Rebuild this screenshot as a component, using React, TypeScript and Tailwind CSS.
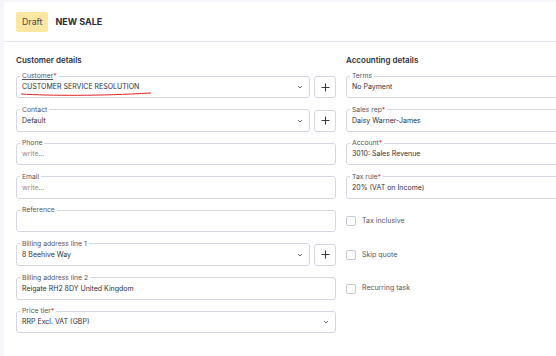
import React from "react";

const font = { fontFamily: "Inter, 'Noto Sans', sans-serif" };

function Chevron() {
  return (
    <svg width="6" height="4" viewBox="0 0 6 4" className="shrink-0">
      <path d="M1 1 L3 3 L5 1" fill="none" stroke="#6b6b78" strokeWidth="1" />
    </svg>
  );
}

function Field({
  label,
  value,
  req,
  placeholder,
  select,
  underline,
  children,
}: {
  label: string;
  value?: string;
  req?: boolean;
  placeholder?: boolean;
  select?: boolean;
  underline?: boolean;
  children?: React.ReactNode;
}) {
  return (
    <fieldset className="relative flex-1 min-w-0 border border-[#d6d6e2] rounded-[3px] pl-[3px] pr-[6px] pb-[4px] m-0">
      <legend className="px-[2px] text-[6.8px] leading-[8px] text-[#555560]">
        <span className={underline ? "underline" : ""}>{label}</span>
        {req && <span className="text-[#e03131]">*</span>}
      </legend>
      <div className="flex items-center h-[12px] mt-[1px] pl-[2px]">
        <span
          className={
            "flex-1 text-[7px] leading-[12px] whitespace-nowrap " +
            (placeholder ? "text-[#8a8a95]" : "text-[#2f2f38]")
          }
        >
          {value}
        </span>
        {select && <Chevron />}
      </div>
      {children}
    </fieldset>
  );
}

function Plus() {
  return (
    <div className="w-[22px] h-[22px] mt-[4px] border border-[#d6d6e2] rounded-[3px] flex items-center justify-center shrink-0">
      <svg width="9" height="9" viewBox="0 0 9 9">
        <path d="M4.5 0.5 V8.5 M0.5 4.5 H8.5" stroke="#3a3a44" strokeWidth="1.1" />
      </svg>
    </div>
  );
}

function Check({ label }: { label: string }) {
  return (
    <div className="flex items-center gap-[6px] h-[26px] pt-[4px]">
      <div className="w-[10px] h-[10px] border border-[#c9c9d6] rounded-[2px] bg-white" />
      <span className="text-[7px] text-[#55555f]">{label}</span>
    </div>
  );
}

export default function App() {
  return (
    <div
      className="w-[556px] h-[356px] overflow-hidden bg-[#f6f6fa] pl-[4px] pt-[2px]"
      style={font}
    >
      <div className="w-[700px] h-[400px] bg-white">
        <div className="flex items-center gap-[7px] pl-[12px] h-[40px] border-b border-[#e6e6ee]">
          <div className="bg-[#fbe7a1] rounded-[2px] px-[6px] h-[20px] flex items-center text-[8.8px] text-[#4a4a50]">
            Draft
          </div>
          <div className="text-[9px] font-bold text-[#2c2c34]">NEW SALE</div>
        </div>
        <div className="flex pl-[12px] pt-[11px] gap-[10px]">
          <div className="w-[320px] flex flex-col">
            <div className="text-[8px] font-semibold text-[#2f2f36] h-[14px] leading-[14px] mb-[5px]">
              Customer details
            </div>
            <div className="flex flex-col gap-[7.6px]">
              <div className="flex gap-[4px]">
                <Field label="Customer" req underline value="CUSTOMER SERVICE RESOLUTION" select>
                  <svg
                    className="absolute left-[3px] top-[12px]"
                    width="132"
                    height="6"
                    viewBox="0 0 132 6"
                  >
                    <path
                      d="M1 2 C 30 3.8, 80 4, 131 1"
                      fill="none"
                      stroke="#e02424"
                      strokeWidth="1"
                    />
                  </svg>
                </Field>
                <Plus />
              </div>
              <div className="flex gap-[4px]">
                <Field label="Contact" value="Default" select />
                <Plus />
              </div>
              <Field label="Phone" value="write..." placeholder />
              <Field label="Email" value="write..." placeholder />
              <Field label="Reference" value="" />
              <div className="flex gap-[4px]">
                <Field label="Billing address line 1" value="8 Beehive Way" select />
                <Plus />
              </div>
              <Field label="Billing address line 2" value="Reigate RH2 8DY United Kingdom" />
              <Field label="Price tier" req value="RRP Excl. VAT (GBP)" select />
            </div>
          </div>
          <div className="w-[260px] flex flex-col">
            <div className="text-[8px] font-semibold text-[#2f2f36] h-[14px] leading-[14px] mb-[5px]">
              Accounting details
            </div>
            <div className="flex flex-col gap-[7.6px]">
              <Field label="Terms" value="No Payment" />
              <Field label="Sales rep" req value="Daisy Warner-James" />
              <Field label="Account" req value="3010: Sales Revenue" />
              <Field label="Tax rule" req value="20% (VAT on Income)" />
              <Check label="Tax inclusive" />
              <Check label="Skip quote" />
              <Check label="Recurring task" />
            </div>
          </div>
        </div>
      </div>
    </div>
  );
}
